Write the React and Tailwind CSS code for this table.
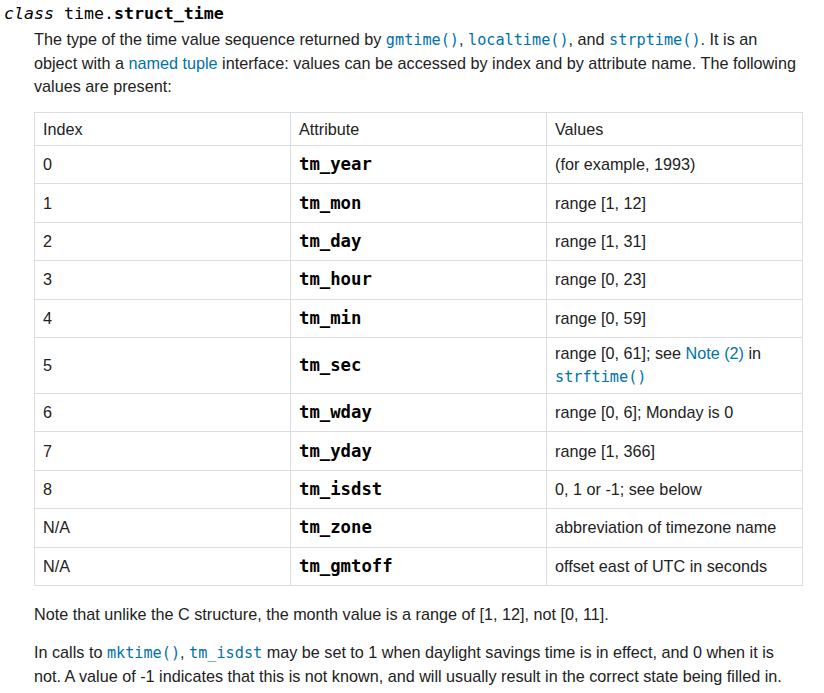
import React from 'react';

const rows = [
  ['0', 'tm_year', '(for example, 1993)'],
  ['1', 'tm_mon', 'range [1, 12]'],
  ['2', 'tm_day', 'range [1, 31]'],
  ['3', 'tm_hour', 'range [0, 23]'],
  ['4', 'tm_min', 'range [0, 59]'],
  ['5', 'tm_sec', 'note'],
  ['6', 'tm_wday', 'range [0, 6]; Monday is 0'],
  ['7', 'tm_yday', 'range [1, 366]'],
  ['8', 'tm_isdst', '0, 1 or -1; see below'],
  ['N/A', 'tm_zone', 'abbreviation of timezone name'],
  ['N/A', 'tm_gmtoff', 'offset east of UTC in seconds'],
];

const mono = "font-['DejaVu_Sans_Mono',monospace]";

const Code = ({ children }) => (
  <code className={`${mono} text-[15.2px] text-[#0072aa]`}>{children}</code>
);

export default function App() {
  return (
    <div className="min-h-screen bg-white text-[#222] font-['Liberation_Sans',Arial,sans-serif] text-[16.2px] leading-[23px] pl-[4px] pt-[2px]">
      <div className={`${mono} text-[16.6px] leading-[24px] text-black`}>
        <em>class</em> time.<strong>struct_time</strong>
      </div>
      <div className="pl-[30px] pr-[22px] pt-[2px]">
        <p>
          The type of the time value sequence returned by <Code>gmtime()</Code>, <Code>localtime()</Code>, and{' '}
          <Code>strptime()</Code>. It is an object with a <span className="text-[#0072aa]">named tuple</span>{' '}
          interface: values can be accessed by index and by attribute name. The following values are present:
        </p>
        <table className="mt-[14px] w-[769px] border-collapse table-fixed">
          <thead>
            <tr className="h-[33px]">
              {['Index', 'Attribute', 'Values'].map((h) => (
                <th key={h} className="border border-[#ddd] text-left font-normal pl-[8px] pr-[9px] py-0 align-middle">
                  {h}
                </th>
              ))}
            </tr>
          </thead>
          <tbody>
            {rows.map(([i, a, v]) => (
              <tr key={a} className={v === 'note' ? 'h-[56px]' : 'h-[38.4px]'}>
                <td className="border border-[#ddd] pl-[8px] pr-[9px] align-middle">{i}</td>
                <td className="border border-[#ddd] pl-[8px] pr-[9px] align-middle">
                  <code className={`${mono} font-bold text-[17.3px] text-black`}>{a}</code>
                </td>
                <td className="border border-[#ddd] pl-[8px] pr-[9px] align-middle">
                  {v === 'note' ? (
                    <>
                      range [0, 61]; see <span className="text-[#0072aa]">Note (2)</span> in{' '}
                      <Code>strftime()</Code>
                    </>
                  ) : (
                    v
                  )}
                </td>
              </tr>
            ))}
          </tbody>
        </table>
        <p className="mt-[17px]">Note that unlike the C structure, the month value is a range of [1, 12], not [0, 11].</p>
        <p className="mt-[15px]">
          In calls to <Code>mktime()</Code>, <Code>tm_isdst</Code> may be set to 1 when daylight savings time is in
          effect, and 0 when it is not. A value of -1 indicates that this is not known, and will usually result in the
          correct state being filled in.
        </p>
      </div>
    </div>
  );
}
